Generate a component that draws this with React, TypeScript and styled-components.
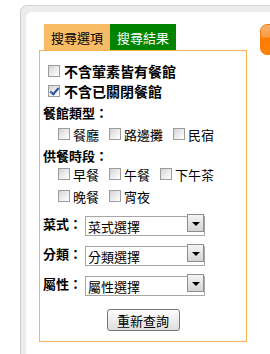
import React from 'react';
import styled, { createGlobalStyle } from 'styled-components';

const GlobalStyle = createGlobalStyle`
  html, body {
    margin: 0;
    padding: 0;
    background: #fff;
    overflow: hidden;
  }
  body {
    font-family: 'Noto Sans CJK TC', 'Noto Sans', sans-serif;
    color: #000;
  }
  * {
    box-sizing: border-box;
  }
`;

const Page = styled.div`
  width: 270px;
  height: 354px;
  padding: 5px 0 0 20px;
  overflow: hidden;
`;

const Frame = styled.div`
  height: 100%;
  background: #ececec;
  border-top: 1px solid #d2d2d2;
  border-left: 1px solid #cdcdcd;
  border-top-left-radius: 7px;
  padding: 6px 0 0 5px;
`;

const Inner = styled.div`
  height: 100%;
  background: #fff;
  border-top-left-radius: 6px;
  padding: 12px 0 0 13px;
  display: flex;
  align-items: flex-start;
  overflow: hidden;
`;

const SearchColumn = styled.div`
  display: flex;
  flex-direction: column;
  width: 208px;
  flex-shrink: 0;
`;

const Tabs = styled.div`
  display: flex;
  padding-left: 5px;
`;

const Tab = styled.div<{ $active?: boolean }>`
  width: 66px;
  height: 26px;
  display: flex;
  align-items: center;
  justify-content: center;
  font-size: 13px;
  background: ${(p) => (p.$active ? '#f8bb66' : '#008400')};
  color: ${(p) => (p.$active ? '#000' : '#fff')};
  cursor: pointer;
`;

const Panel = styled.div`
  border: 1px solid #f9b550;
  padding: 10px 3px 10px 3px;
  display: flex;
  flex-direction: column;
`;

const CheckLine = styled.label`
  display: flex;
  align-items: center;
  height: 20px;
  padding-left: 5px;
  font-size: 14px;
  font-weight: 700;
  gap: 4px;
`;

const Box = styled.input.attrs({ type: 'checkbox' })`
  appearance: none;
  -webkit-appearance: none;
  margin: 0;
  width: 12px;
  height: 12px;
  flex-shrink: 0;
  border: 1px solid #9c9c9c;
  background: linear-gradient(135deg, #d2d2d2 0%, #e9e9e9 45%, #ffffff 100%);
  position: relative;

  &:checked::after {
    content: '';
    position: absolute;
    left: 3px;
    top: 0px;
    width: 3px;
    height: 7px;
    border: solid #2a4fa8;
    border-width: 0 2px 2px 0;
    transform: rotate(40deg);
  }
`;

const SectionTitle = styled.div<{ $gap?: number }>`
  height: ${(p) => (p.$gap ? 20 : 22)}px;
  margin-top: ${(p) => p.$gap ?? 0}px;
  display: flex;
  align-items: center;
  font-size: 13px;
  font-weight: 700;
`;

const OptionGroup = styled.div<{ $top: number }>`
  display: flex;
  flex-wrap: wrap;
  column-gap: 10px;
  row-gap: 4px;
  padding-left: 15px;
  margin-top: ${(p) => p.$top}px;
`;

const Option = styled.label`
  display: flex;
  align-items: center;
  height: 18px;
  gap: 3px;
  font-size: 13px;
`;

const FieldRow = styled.div<{ $top: number }>`
  display: flex;
  align-items: center;
  height: 20px;
  margin-top: ${(p) => p.$top}px;
`;

const FieldLabel = styled.span`
  width: 42px;
  font-size: 13px;
  font-weight: 700;
`;

const SelectWrap = styled.div`
  position: relative;
  width: 120px;
  height: 20px;
`;

const Select = styled.select`
  appearance: none;
  -webkit-appearance: none;
  width: 100%;
  height: 100%;
  margin: 0;
  border: 1px solid #a6a6a6;
  border-radius: 0;
  background: #fff;
  padding: 0 0 0 2px;
  font-family: inherit;
  font-size: 13px;
  color: #000;
  outline: none;
`;

const DropButton = styled.span`
  position: absolute;
  top: 1px;
  right: 1px;
  width: 17px;
  height: 18px;
  border: 1px solid #8e8e8e;
  background: linear-gradient(#f4f4f4, #d4d4d4);
  display: flex;
  align-items: center;
  justify-content: center;
  pointer-events: none;

  &::after {
    content: '';
    border-left: 4px solid transparent;
    border-right: 4px solid transparent;
    border-top: 4px solid #000;
    margin-top: 1px;
  }
`;

const ButtonRow = styled.div`
  display: flex;
  justify-content: center;
  margin-top: 16px;
`;

const ResetButton = styled.button`
  width: 73px;
  height: 22px;
  border: 1px solid #767676;
  border-radius: 3px;
  background: linear-gradient(#fdfdfd, #dedede);
  font-family: inherit;
  font-size: 13px;
  color: #000;
  padding: 0;
  cursor: pointer;
`;

const SideTab = styled.div`
  margin-left: 13px;
  width: 30px;
  height: 31px;
  flex-shrink: 0;
  border-radius: 7px;
  border: 1px solid #f07a10;
  background: linear-gradient(#fbb36e 0%, #f99b45 40%, #ff7a00 46%, #ff8204 100%);
`;

const types = ['餐廳', '路邊攤', '民宿'];
const times = ['早餐', '午餐', '下午茶', '晚餐', '宵夜'];
const fields = [
  { label: '菜式：', placeholder: '菜式選擇', top: 8 },
  { label: '分類：', placeholder: '分類選擇', top: 10 },
  { label: '屬性：', placeholder: '屬性選擇', top: 10 },
];

const App = () => {
  return (
    <>
      <GlobalStyle />
      <Page>
        <Frame>
          <Inner>
            <SearchColumn>
              <Tabs>
                <Tab $active>搜尋選項</Tab>
                <Tab>搜尋結果</Tab>
              </Tabs>
              <Panel>
                <CheckLine>
                  <Box />
                  不含葷素皆有餐館
                </CheckLine>
                <CheckLine>
                  <Box defaultChecked />
                  不含已關閉餐館
                </CheckLine>
                <SectionTitle>餐館類型：</SectionTitle>
                <OptionGroup $top={2}>
                  {types.map((t) => (
                    <Option key={t}>
                      <Box />
                      {t}
                    </Option>
                  ))}
                </OptionGroup>
                <SectionTitle $gap={2}>供餐時段：</SectionTitle>
                <OptionGroup $top={0}>
                  {times.map((t) => (
                    <Option key={t}>
                      <Box />
                      {t}
                    </Option>
                  ))}
                </OptionGroup>
                {fields.map((f) => (
                  <FieldRow key={f.label} $top={f.top}>
                    <FieldLabel>{f.label}</FieldLabel>
                    <SelectWrap>
                      <Select defaultValue=''>
                        <option value=''>{f.placeholder}</option>
                      </Select>
                      <DropButton />
                    </SelectWrap>
                  </FieldRow>
                ))}
                <ButtonRow>
                  <ResetButton>重新查詢</ResetButton>
                </ButtonRow>
              </Panel>
            </SearchColumn>
            <SideTab />
          </Inner>
        </Frame>
      </Page>
    </>
  );
};

export default App;
